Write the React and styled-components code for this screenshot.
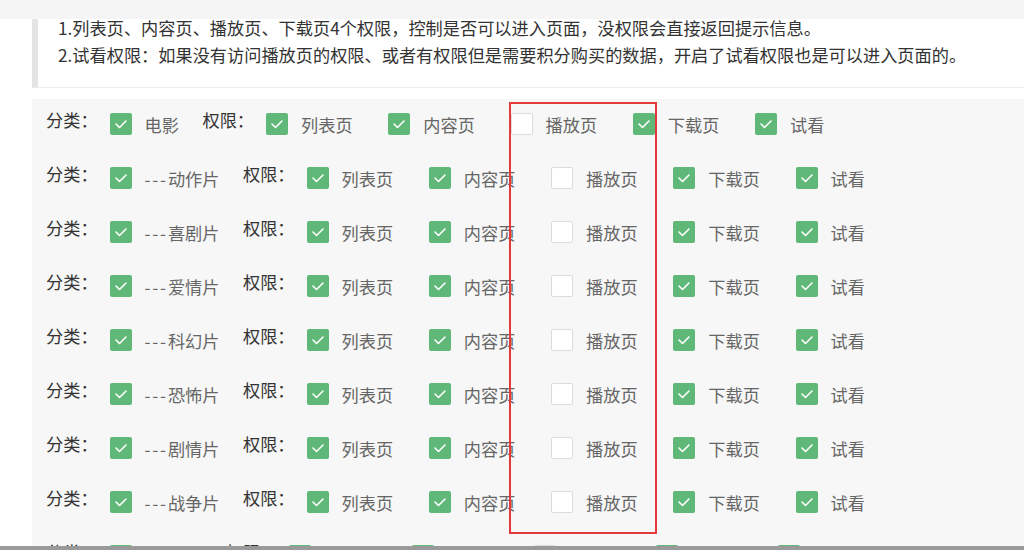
import React from "react";
import styled, { createGlobalStyle } from "styled-components";

const GlobalStyle = createGlobalStyle`
  html, body {
    margin: 0;
    padding: 0;
    background: #fff;
    font-family: "Noto Sans CJK SC", "Liberation Sans", sans-serif;
  }
`;

const perms = ["列表页", "内容页", "播放页", "下载页", "试看"];

const rows = [
  { name: "电影", sub: false },
  { name: "动作片", sub: true },
  { name: "喜剧片", sub: true },
  { name: "爱情片", sub: true },
  { name: "科幻片", sub: true },
  { name: "恐怖片", sub: true },
  { name: "剧情片", sub: true },
  { name: "战争片", sub: true },
  { name: "其他", sub: true },
];

const Check = ({ on }) => (
  <Box on={on ? 1 : 0}>
    {on && (
      <svg width="22" height="22" viewBox="0 0 22 22">
        <polyline
          points="6,11 9.5,14.5 16,8"
          fill="none"
          stroke="#fff"
          strokeWidth="1.6"
          strokeLinecap="round"
          strokeLinejoin="round"
        />
      </svg>
    )}
  </Box>
);

const App = () => {
  return (
    <Page>
      <GlobalStyle />
      <TopBar />
      <Quote>
        <p>1.列表页、内容页、播放页、下载页4个权限，控制是否可以进入页面，没权限会直接返回提示信息。</p>
        <p>2.试看权限：如果没有访问播放页的权限、或者有权限但是需要积分购买的数据，开启了试看权限也是可以进入页面的。</p>
      </Quote>
      <Panel>
        {rows.map((r) => (
          <Row key={r.name}>
            <Label>分类：</Label>
            <Item gap={23.5}>
              <Check on />
              <ItemText>
                {r.sub && <Dash>---</Dash>}
                {r.name}
              </ItemText>
            </Item>
            <Label>权限：</Label>
            {perms.map((p) => (
              <Item key={p} gap={35.7}>
                <Check on={p !== "播放页"} />
                <ItemText>{p}</ItemText>
              </Item>
            ))}
          </Row>
        ))}
      </Panel>
      <ScrollBar />
      <Highlight />
    </Page>
  );
};

export default App;

const Page = styled.div`
  position: relative;
  height: 550px;
  display: flex;
  flex-direction: column;
  overflow: hidden;
`;

const TopBar = styled.div`
  position: absolute;
  top: 0;
  left: 0;
  right: 0;
  height: 19px;
  background: #f5f5f5;
  z-index: 2;
`;

const Quote = styled.div`
  margin-left: 32px;
  padding: 14px 0 19px 20px;
  border-left: 6px solid #e4e4e4;
  border-bottom: 1px solid #ececec;
  font-size: 17.2px;
  line-height: 27px;
  color: #333;
  white-space: nowrap;

  p {
    margin: 0;
  }
`;

const Panel = styled.div`
  flex: 1;
  min-height: 0;
  overflow: hidden;
  margin: 11px 0 0 32px;
  padding: 3px 0 0 14px;
  background: #f7f7f7;
`;

const Row = styled.div`
  display: flex;
  align-items: center;
  height: 44px;
  margin-bottom: 10px;
  white-space: nowrap;
`;

const Label = styled.span`
  font-size: 17.2px;
  color: #333;
  margin: 0 12px 9px 0;
`;

const Item = styled.span`
  display: flex;
  align-items: center;
  margin-right: ${(p) => p.gap}px;
`;

const Box = styled.span`
  width: 22px;
  height: 22px;
  box-sizing: border-box;
  border-radius: 2px;
  margin-right: 13px;
  background: ${(p) => (p.on ? "#5fb878" : "#fff")};
  border: ${(p) => (p.on ? "none" : "1px solid #dcdcdc")};
  display: flex;

  svg {
    display: block;
  }
`;

const ItemText = styled.span`
  font-size: 17.2px;
  color: #666;
`;

const Dash = styled.span`
  letter-spacing: 1.8px;
`;

const ScrollBar = styled.div`
  height: 4px;
  flex-shrink: 0;
  background: #9a9a9a;
`;

const Highlight = styled.div`
  position: absolute;
  left: 509px;
  top: 102px;
  width: 148px;
  height: 432px;
  box-sizing: border-box;
  border: 2.5px solid #e5393c;
  pointer-events: none;
`;
